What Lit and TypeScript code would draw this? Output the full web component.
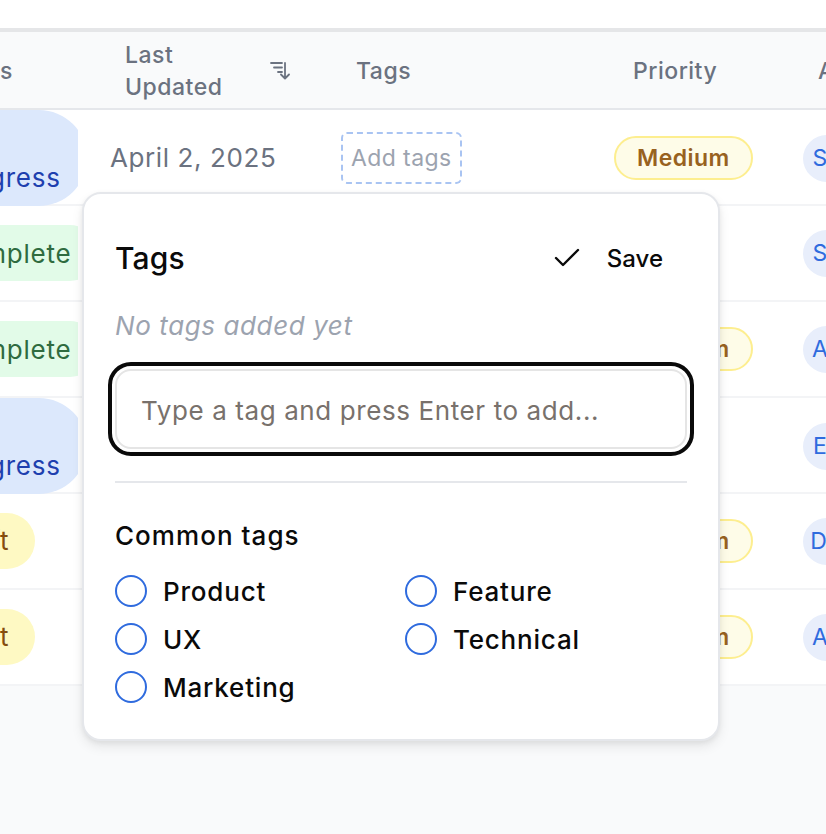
import { LitElement, css, html } from 'lit'
import { customElement } from 'lit/decorators.js'

type Row = {
  status: string
  statusClass: string
  date: string
  priority: string
  priorityClass: string
  initials: string
}

const rows: Row[] = [
  { status: 'In Progress', statusClass: 'progress', date: 'April 2, 2025', priority: 'Medium', priorityClass: 'medium', initials: 'SJ' },
  { status: 'Complete', statusClass: 'complete', date: 'March 28, 2025', priority: 'Low', priorityClass: 'low', initials: 'SL' },
  { status: 'Complete', statusClass: 'complete', date: 'March 25, 2025', priority: 'Medium', priorityClass: 'medium', initials: 'AL' },
  { status: 'In Progress', statusClass: 'progress', date: 'March 20, 2025', priority: 'Low', priorityClass: 'low', initials: 'EL' },
  { status: 'Draft', statusClass: 'draft', date: 'March 18, 2025', priority: 'Medium', priorityClass: 'medium', initials: 'DK' },
  { status: 'Draft', statusClass: 'draft', date: 'March 15, 2025', priority: 'Medium', priorityClass: 'medium', initials: 'AL' },
]

const commonTags = ['Product', 'Feature', 'UX', 'Technical', 'Marketing']

@customElement('app-root')
export class AppRoot extends LitElement {
  static styles = css`
    :host {
      display: block;
      position: relative;
      height: 834px;
      overflow: hidden;
      background: #f9fafb;
      font-family: Inter, 'Noto Sans', sans-serif;
      letter-spacing: 0.6px;
    }
    .topbar {
      height: 28px;
      background: #fff;
      border-bottom: 4px solid #e5e6e8;
    }
    .table {
      width: 1013px;
      margin-left: -97px;
    }
    .head,
    .row {
      display: grid;
      grid-template-columns: 191px 231px 273px 189px 129px;
    }
    .head {
      height: 74px;
      padding-top: 2px;
      align-items: center;
      background: #f9fafb;
      border-bottom: 2px solid #e5e7eb;
      color: #6b7280;
      font-size: 23px;
      line-height: 32px;
      font-weight: 450;
      letter-spacing: 0.5px;
    }
    .th {
      padding-left: 31px;
    }
    .th.first {
      padding-left: 37px;
    }
    .th.pri {
      padding-left: 35px;
    }
    .th.sort {
      display: flex;
      align-items: center;
    }
    .th.sort span {
      width: 145px;
    }
    .th.sort span b {
      display: block;
      width: 110px;
      font-weight: inherit;
    }
    .th.sort svg {
      display: block;
    }
    .row {
      height: 94px;
      align-items: center;
      background: #fff;
      border-bottom: 2px solid #f3f4f6;
    }
    .td {
      padding-left: 16px;
      min-width: 0;
    }
    .clip {
      width: 159px;
      overflow: hidden;
    }
    .status {
      box-sizing: border-box;
      width: fit-content;
      padding: 8px 26px;
      border-radius: 999px;
      font-size: 26px;
      line-height: 40px;
      letter-spacing: 0.8px;
    }
    .status.progress {
      background: #dce8fc;
      color: #1e40af;
    }
    .status.complete {
      padding: 9px 26px 7px 28px;
      background: #e2fbe8;
      color: #2f6b3f;
    }
    .status.draft {
      background: #fef9c3;
      color: #854d0e;
    }
    .date {
      color: #6b7280;
      font-size: 26px;
      line-height: 40px;
      white-space: nowrap;
    }
    .add {
      width: fit-content;
      margin-top: -1px;
      padding: 0 8px;
      border: 2px dashed #a9c4f2;
      border-radius: 6px;
      color: #9ca3af;
      font-size: 23px;
      line-height: 48px;
      white-space: nowrap;
      letter-spacing: 0.4px;
    }
    .priority {
      width: fit-content;
      padding: 0 21px;
      border: 2px solid #fdee8f;
      border-radius: 999px;
      font-size: 23px;
      font-weight: 600;
      line-height: 40px;
      letter-spacing: 0.45px;
    }
    .priority.medium {
      background: #fefce8;
      color: #98621f;
    }
    .priority.low {
      background: #f3f4f6;
      border-color: #e5e7eb;
      color: #4b5563;
    }
    .avatar {
      display: flex;
      align-items: center;
      justify-content: center;
      width: 48px;
      height: 47px;
      border-radius: 50%;
      background: #e8eefb;
      color: #2f6bde;
      font-size: 23px;
      white-space: nowrap;
    }
    .popover {
      position: absolute;
      left: 82px;
      top: 192px;
      box-sizing: border-box;
      width: 638px;
      height: 549px;
      padding: 31px 31px 0;
      background: #fff;
      border: 2px solid #e5e7eb;
      border-radius: 19px;
      box-shadow: 0 6px 12px rgba(0, 0, 0, 0.08), 0 2px 5px rgba(0, 0, 0, 0.06);
      color: #0a0a0a;
    }
    .pop-head {
      display: flex;
      align-items: center;
      justify-content: space-between;
      height: 66px;
    }
    .title {
      font-size: 30px;
      font-weight: 450;
      letter-spacing: 0.2px;
    }
    .save {
      display: flex;
      align-items: center;
      gap: 27px;
      padding-right: 24px;
      font-size: 24px;
      font-weight: 450;
      letter-spacing: 0;
    }
    .save svg {
      display: block;
    }
    .empty {
      margin-top: 17px;
      color: #9ca3af;
      font-size: 26px;
      font-style: italic;
      line-height: 36px;
    }
    .field {
      margin-top: 25px;
      box-sizing: border-box;
      height: 80px;
      display: flex;
      align-items: center;
      padding: 3px 0 0 24px;
      border: 2px solid #e5e5e5;
      border-radius: 16px;
      outline: 4.5px solid #0a0a0a;
      outline-offset: 3px;
      color: #78716c;
      font-size: 26px;
    }
    .sep {
      height: 2px;
      margin-top: 32px;
      background: #e5e7eb;
    }
    .common {
      margin-top: 35px;
      font-size: 26px;
      font-weight: 450;
      line-height: 36px;
      letter-spacing: 1.05px;
    }
    .tags {
      display: grid;
      grid-template-columns: 290px 1fr;
      grid-auto-rows: 48px;
      margin-top: 13px;
    }
    .tag {
      display: flex;
      align-items: center;
      gap: 16px;
      font-size: 26px;
      font-weight: 450;
      letter-spacing: 0.8px;
    }
    .radio {
      box-sizing: border-box;
      width: 32px;
      height: 32px;
      border: 2px solid #2f6bde;
      border-radius: 50%;
    }
  `

  render() {
    return html`
      <div class="topbar"></div>
      <div class="table">
        <div class="head">
          <div class="th first">Status</div>
          <div class="th sort">
            <span><b>Last Updated</b></span>
            <svg width="20" height="20" viewBox="0 0 20 20" fill="none" stroke="#6b7280" stroke-width="1.8" stroke-linecap="round" stroke-linejoin="round">
              <path d="M1 2h11M4 6.5h8M8 11h4M15 2v15M11 13.5l4 4 4-4" />
            </svg>
          </div>
          <div class="th">Tags</div>
          <div class="th pri">Priority</div>
          <div class="th">Assignee</div>
        </div>
        ${rows.map(
          (r) => html`
            <div class="row">
              <div class="td">
                <div class="clip"><div class="status ${r.statusClass}">${r.status}</div></div>
              </div>
              <div class="td"><div class="date">${r.date}</div></div>
              <div class="td"><div class="add">Add tags</div></div>
              <div class="td"><div class="priority ${r.priorityClass}">${r.priority}</div></div>
              <div class="td"><div class="avatar">${r.initials}</div></div>
            </div>
          `
        )}
      </div>
      <div class="popover">
        <div class="pop-head">
          <div class="title">Tags</div>
          <div class="save">
            <svg width="26" height="20" viewBox="0 0 26 20" fill="none" stroke="#0a0a0a" stroke-width="2.4" stroke-linecap="round" stroke-linejoin="round">
              <path d="M2 10l7 7L24 2" />
            </svg>
            <span>Save</span>
          </div>
        </div>
        <div class="empty">No tags added yet</div>
        <div class="field">Type a tag and press Enter to add...</div>
        <div class="sep"></div>
        <div class="common">Common tags</div>
        <div class="tags">
          ${commonTags.map(
            (t) => html`<div class="tag"><span class="radio"></span><span>${t}</span></div>`
          )}
        </div>
      </div>
    `
  }
}
